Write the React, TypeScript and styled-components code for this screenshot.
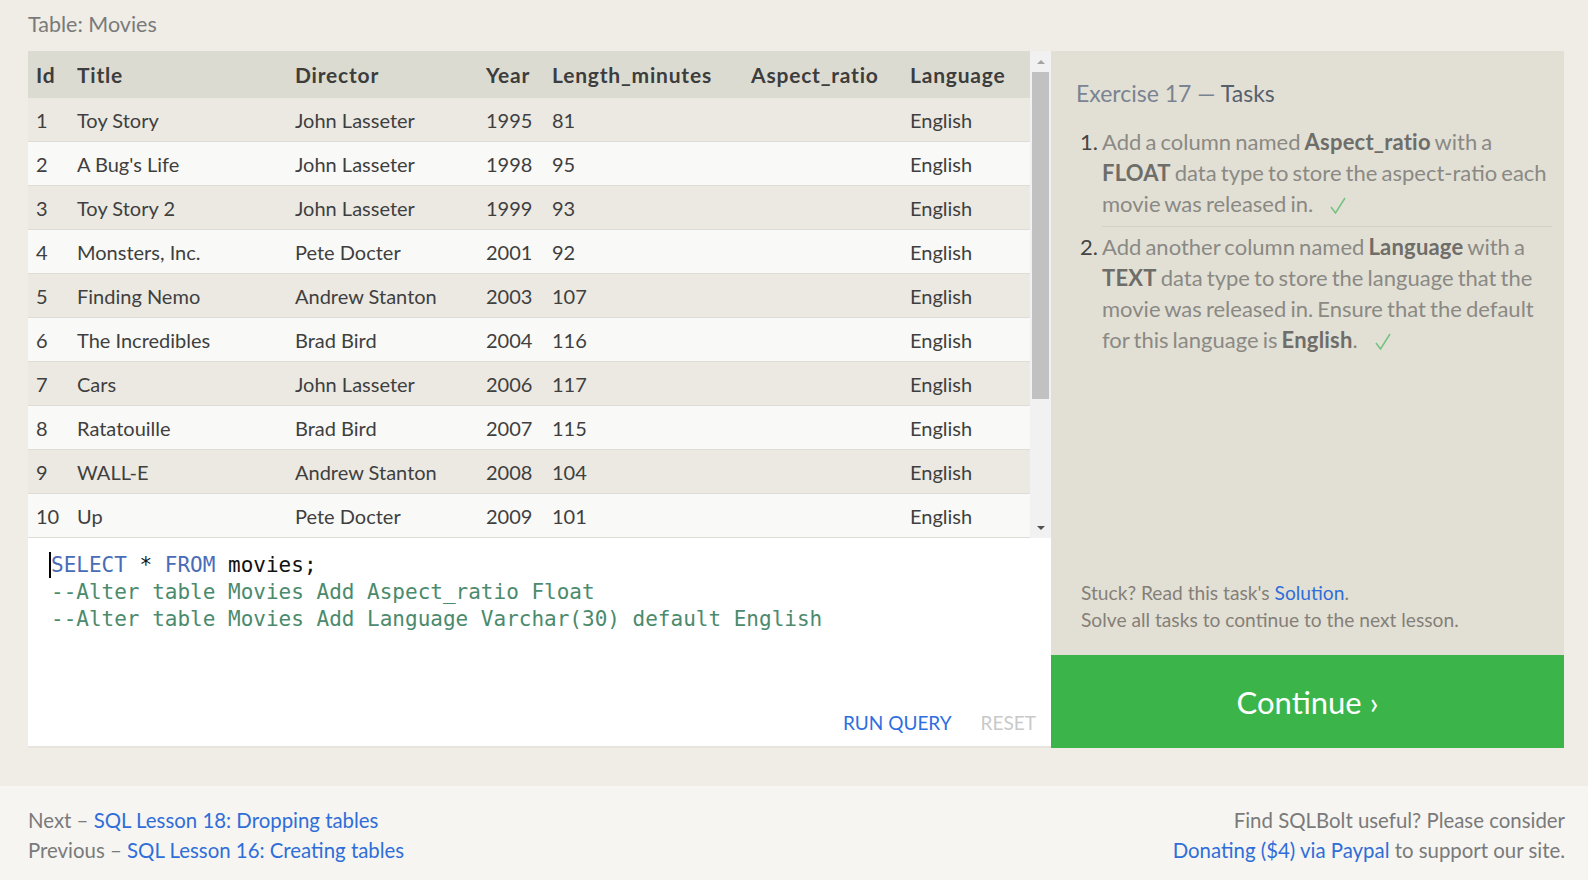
import React from "react";
import styled, { createGlobalStyle } from "styled-components";

const GlobalStyle = createGlobalStyle`
  html, body { margin: 0; padding: 0; }
  body {
    background: #efede6;
    font-family: "Lato", "Liberation Sans", sans-serif;
    color: #444;
  }
`;

const Page = styled.div`
  display: flex;
  flex-direction: column;
  min-height: 880px;
`;

const Main = styled.main`
  padding: 0 24px 0 28px;
`;

const TableLabel = styled.div`
  box-sizing: border-box;
  height: 51px;
  padding-top: 9px;
  font-size: 21.5px;
  line-height: 30px;
  color: #7a7a7a;
`;

const Workspace = styled.div`
  display: flex;
`;

const LeftColumn = styled.section`
  width: 1023px;
  display: flex;
  flex-direction: column;
`;

const TableArea = styled.div`
  display: flex;
  height: 487px;
`;

const TableViewport = styled.div`
  flex: 1;
  overflow: hidden;
`;

const DataTable = styled.table`
  width: 100%;
  table-layout: fixed;
  border-collapse: collapse;
`;

const HeadCell = styled.th`
  box-sizing: border-box;
  height: 47px;
  padding: 0 8px;
  background: #dcdbd1;
  text-align: left;
  font-size: 21px;
  font-weight: 700;
  letter-spacing: 0.8px;
  color: #3d3d3d;
  white-space: nowrap;
`;

const Row = styled.tr<{ $odd: boolean }>`
  background: ${(p) => (p.$odd ? "#ebe9e2" : "#f9f9f7")};
  border-bottom: 1px solid #dedcd4;
`;

const Cell = styled.td`
  height: 43px;
  padding: 0 8px;
  font-size: 20px;
  color: #3f3f3f;
  white-space: nowrap;
`;

const Scrollbar = styled.div`
  width: 21px;
  background: #f1f1f1;
  display: flex;
  flex-direction: column;
`;

const ScrollButton = styled.div`
  height: 21px;
  display: flex;
  align-items: center;
  justify-content: center;
`;

const Arrow = styled.span<{ $dir: "up" | "down" }>`
  width: 0;
  height: 0;
  border-left: 4px solid transparent;
  border-right: 4px solid transparent;
  ${(p) =>
    p.$dir === "up"
      ? "border-bottom: 4px solid #a3a3a3;"
      : "border-top: 4px solid #505050;"}
`;

const Track = styled.div`
  flex: 1;
  padding: 0 2px;
`;

const Thumb = styled.div`
  height: 327px;
  background: #c1c1c1;
`;

const Editor = styled.div`
  height: 210px;
  box-sizing: border-box;
  background: #fff;
  border-bottom: 2px solid #e6e4dd;
  display: flex;
  flex-direction: column;
`;

const Code = styled.pre`
  flex: 1;
  margin: 0;
  padding: 14px 0 0 23px;
  font-family: "DejaVu Sans Mono", "Liberation Mono", monospace;
  font-size: 21px;
  line-height: 27px;
  color: #111;
`;

const Caret = styled.span`
  display: inline-block;
  width: 0;
  height: 26px;
  margin-left: -2px;
  border-left: 2px solid #000;
  vertical-align: -6px;
`;

const Keyword = styled.span`
  color: #4a6cb8;
`;

const Comment = styled.span`
  color: #4b8a6c;
`;

const Actions = styled.div`
  display: flex;
  justify-content: flex-end;
  gap: 29px;
  padding: 0 15px 11px 0;
`;

const ActionButton = styled.span<{ $muted?: boolean }>`
  font-size: 19px;
  line-height: 24px;
  color: ${(p) => (p.$muted ? "#c9c9c9" : "#2d6fe0")};
`;

const RightColumn = styled.aside`
  width: 513px;
  display: flex;
  flex-direction: column;
`;

const TasksBox = styled.div`
  flex: 1;
  background: #e2e0d5;
  padding: 27px 12px 22px 25px;
  display: flex;
  flex-direction: column;
`;

const TasksHeading = styled.h2`
  margin: 0;
  font-size: 23px;
  font-weight: 400;
  line-height: 30px;
  color: #7a8391;
`;

const HeadingStrong = styled.span`
  color: #56606d;
`;

const TaskList = styled.ol`
  margin: 18px 0 0;
  padding-left: 26px;
`;

const TaskItem = styled.li<{ $first?: boolean }>`
  font-size: 22px;
  line-height: 31px;
  word-spacing: -1.5px;
  color: #8a8984;
  padding: ${(p) => (p.$first ? "0 0 7px" : "4px 0 0")};
  border-bottom: ${(p) => (p.$first ? "1px solid #d3d1c6" : "none")};
  &::marker {
    color: #444;
  }
`;

const Strong = styled.b`
  color: #6e6d69;
  letter-spacing: 0.2px;
`;

const Check = styled.svg`
  margin-left: 17px;
  vertical-align: -2px;
`;

const Stuck = styled.div`
  margin-top: auto;
  padding-left: 5px;
  font-size: 19.2px;
  line-height: 27px;
  color: #857f78;
`;

const Link = styled.a`
  color: #2f6ed8;
  text-decoration: none;
`;

const ContinueButton = styled.div`
  height: 93px;
  background: #3bb54a;
  color: #fff;
  font-size: 31px;
  display: flex;
  align-items: center;
  justify-content: center;
`;

const Footer = styled.footer`
  margin-top: 38px;
  flex: 1;
  background: #f6f5f2;
  padding: 19px 23px 20px 28px;
  display: flex;
  justify-content: space-between;
  font-size: 20.4px;
  line-height: 30px;
  color: #7a7a7a;
`;

const FooterBlock = styled.div<{ $right?: boolean }>`
  text-align: ${(p) => (p.$right ? "right" : "left")};
`;

const columns = [
  { name: "Id", width: 41 },
  { name: "Title", width: 218 },
  { name: "Director", width: 191 },
  { name: "Year", width: 66 },
  { name: "Length_minutes", width: 199 },
  { name: "Aspect_ratio", width: 159 },
  { name: "Language", width: 128 },
];

const movies: [number, string, string, number, number][] = [
  [1, "Toy Story", "John Lasseter", 1995, 81],
  [2, "A Bug's Life", "John Lasseter", 1998, 95],
  [3, "Toy Story 2", "John Lasseter", 1999, 93],
  [4, "Monsters, Inc.", "Pete Docter", 2001, 92],
  [5, "Finding Nemo", "Andrew Stanton", 2003, 107],
  [6, "The Incredibles", "Brad Bird", 2004, 116],
  [7, "Cars", "John Lasseter", 2006, 117],
  [8, "Ratatouille", "Brad Bird", 2007, 115],
  [9, "WALL-E", "Andrew Stanton", 2008, 104],
  [10, "Up", "Pete Docter", 2009, 101],
  [11, "Toy Story 3", "Lee Unkrich", 2010, 103],
  [12, "Cars 2", "John Lasseter", 2011, 120],
  [13, "Brave", "Brenda Chapman", 2012, 102],
  [14, "Monsters University", "Dan Scanlon", 2013, 110],
];

const CheckMark = () => (
  <Check width="16" height="17" viewBox="0 0 16 17">
    <polyline
      points="1,10 5.5,16 15,1"
      fill="none"
      stroke="#74c27f"
      strokeWidth="1.5"
    />
  </Check>
);

export default function App() {
  return (
    <Page>
      <GlobalStyle />
      <Main>
        <TableLabel>Table: Movies</TableLabel>
        <Workspace>
          <LeftColumn>
            <TableArea>
              <TableViewport>
                <DataTable>
                  <colgroup>
                    {columns.map((c) => (
                      <col key={c.name} style={{ width: c.width }} />
                    ))}
                  </colgroup>
                  <thead>
                    <tr>
                      {columns.map((c) => (
                        <HeadCell key={c.name}>{c.name}</HeadCell>
                      ))}
                    </tr>
                  </thead>
                  <tbody>
                    {movies.map((m, i) => (
                      <Row key={m[0]} $odd={i % 2 === 0}>
                        <Cell>{m[0]}</Cell>
                        <Cell>{m[1]}</Cell>
                        <Cell>{m[2]}</Cell>
                        <Cell>{m[3]}</Cell>
                        <Cell>{m[4]}</Cell>
                        <Cell></Cell>
                        <Cell>English</Cell>
                      </Row>
                    ))}
                  </tbody>
                </DataTable>
              </TableViewport>
              <Scrollbar>
                <ScrollButton>
                  <Arrow $dir="up" />
                </ScrollButton>
                <Track>
                  <Thumb />
                </Track>
                <ScrollButton>
                  <Arrow $dir="down" />
                </ScrollButton>
              </Scrollbar>
            </TableArea>
            <Editor>
              <Code>
                <Caret />
                <Keyword>SELECT</Keyword> * <Keyword>FROM</Keyword> movies;
                {"\n"}
                <Comment>--Alter table Movies Add Aspect_ratio Float</Comment>
                {"\n"}
                <Comment>
                  --Alter table Movies Add Language Varchar(30) default English
                </Comment>
              </Code>
              <Actions>
                <ActionButton>RUN QUERY</ActionButton>
                <ActionButton $muted>RESET</ActionButton>
              </Actions>
            </Editor>
          </LeftColumn>
          <RightColumn>
            <TasksBox>
              <TasksHeading>
                Exercise 17 — <HeadingStrong>Tasks</HeadingStrong>
              </TasksHeading>
              <TaskList>
                <TaskItem $first>
                  Add a column named <Strong>Aspect_ratio</Strong> with a{" "}
                  <Strong>FLOAT</Strong> data type to store the aspect-ratio
                  each movie was released in.
                  <CheckMark />
                </TaskItem>
                <TaskItem>
                  Add another column named <Strong>Language</Strong> with a{" "}
                  <Strong>TEXT</Strong> data type to store the language that
                  the movie was released in. Ensure that the default for this
                  language is <Strong>English</Strong>.
                  <CheckMark />
                </TaskItem>
              </TaskList>
              <Stuck>
                Stuck? Read this task's <Link href="#">Solution</Link>.
                <br />
                Solve all tasks to continue to the next lesson.
              </Stuck>
            </TasksBox>
            <ContinueButton>Continue ›</ContinueButton>
          </RightColumn>
        </Workspace>
      </Main>
      <Footer>
        <FooterBlock>
          Next – <Link href="#">SQL Lesson 18: Dropping tables</Link>
          <br />
          Previous – <Link href="#">SQL Lesson 16: Creating tables</Link>
        </FooterBlock>
        <FooterBlock $right>
          Find SQLBolt useful? Please consider
          <br />
          <Link href="#">Donating ($4) via Paypal</Link> to support our site.
        </FooterBlock>
      </Footer>
    </Page>
  );
}
